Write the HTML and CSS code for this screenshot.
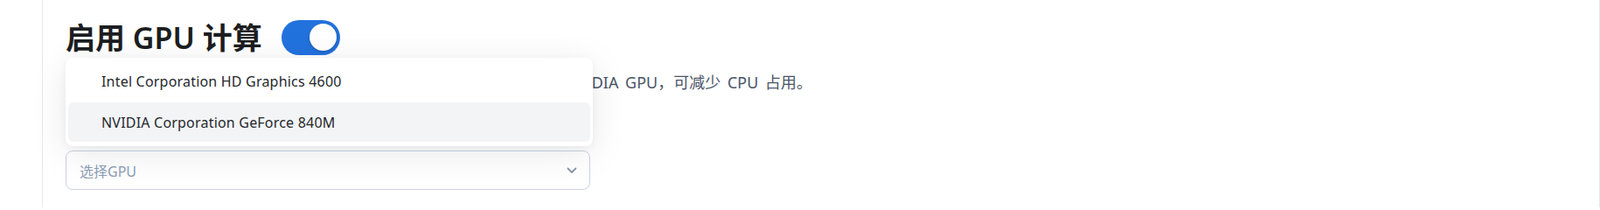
FILE: index.html
```html
<!DOCTYPE html>
<html lang="zh-CN">
<head>
<meta charset="utf-8">
<title>启用 GPU 计算</title>
<link rel="stylesheet" href="styles.css">
</head>
<body>
<div class="page">
  <main class="panel">
    <div class="title-row">
      <h1 class="title">启用 <span class="title-latin">GPU</span> 计算</h1>
      <span class="toggle" role="switch" aria-checked="true"><span class="knob"></span></span>
    </div>
    <p class="desc">开启后，语音识别与降噪等模型将在显卡上运行，推荐使用独立显卡 (如NVIDIA GPU，可减少 CPU 占用。</p>
    <div class="select-wrap">
      <ul class="menu">
        <li class="item">Intel Corporation HD Graphics 4600</li>
        <li class="item active">NVIDIA Corporation GeForce 840M</li>
      </ul>
      <div class="select">
        <span class="placeholder">选择GPU</span>
        <svg class="chevron" width="12" height="8" viewBox="0 0 12 8" aria-hidden="true"><path d="M1.5 1.5 6 6l4.5-4.5" fill="none" stroke="currentColor" stroke-width="1.8" stroke-linecap="round" stroke-linejoin="round"/></svg>
      </div>
    </div>
  </main>
</div>
</body>
</html>
```

FILE: styles.css
```css
html, body {
  margin: 0;
  padding: 0;
  background: #ffffff;
}
body {
  font-family: "Noto Sans", "Noto Sans CJK SC", sans-serif;
  color: #222529;
}
.page {
  display: flex;
  height: 237px;
  padding-left: 48px;
}
.panel {
  flex: 1;
  border-left: 1px solid #e4e9f0;
  border-right: 1px solid #e4e9f0;
  padding: 22px 0 0 26px;
  box-sizing: border-box;
}
.title-row {
  display: flex;
  align-items: center;
  gap: 22px;
  height: 41px;
}
.title {
  margin: 0;
  font-size: 34px;
  font-weight: 700;
  line-height: 40px;
  color: #1c1e21;
}
.title-latin {
  font-weight: 600;
}
.toggle {
  display: flex;
  justify-content: flex-end;
  align-items: center;
  box-sizing: border-box;
  width: 67px;
  height: 40px;
  padding: 0 4px;
  border-radius: 20px;
  background: #2272de;
}
.knob {
  width: 31px;
  height: 31px;
  border-radius: 50%;
  background: #ffffff;
  box-shadow: 0 1px 3px rgba(0, 0, 0, 0.25);
}
.desc {
  margin: 18px 0 0;
  font-size: 18px;
  line-height: 26px;
  word-spacing: 3px;
  color: #4a5568;
  white-space: nowrap;
}
.select-wrap {
  position: relative;
  width: 600px;
  margin-top: 65px;
}
.select {
  display: flex;
  align-items: center;
  justify-content: space-between;
  height: 45px;
  box-sizing: border-box;
  padding: 0 14px 0 15px;
  border: 1px solid #c9d3e1;
  border-radius: 8px;
  background: #ffffff;
}
.placeholder {
  font-size: 16px;
  color: #8d9db6;
}
.chevron {
  color: #8896ac;
}
.menu {
  position: absolute;
  left: 0;
  right: -3px;
  bottom: calc(100% + 5px);
  margin: 0;
  padding: 4px 3px 5px;
  list-style: none;
  display: flex;
  flex-direction: column;
  gap: 2px;
  background: #ffffff;
  border-radius: 8px;
  box-shadow: 0 8px 44px rgba(15, 23, 42, 0.09), 0 2px 10px rgba(15, 23, 42, 0.05);
}
.item {
  height: 45px;
  display: flex;
  align-items: center;
  padding-left: 38px;
  border-radius: 6px;
  font-size: 16px;
  letter-spacing: 0.2px;
  color: #25282c;
}
.item.active {
  background: #f3f4f6;
}
```
